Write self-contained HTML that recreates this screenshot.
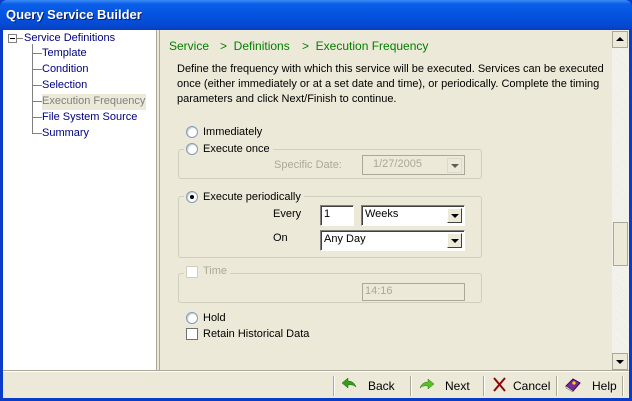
<!DOCTYPE html>
<html><head><meta charset="utf-8"><style>
*{margin:0;padding:0;box-sizing:border-box}
body{width:632px;height:401px;position:relative;overflow:hidden;background:#0a3cc8;font-family:"Liberation Sans",Tahoma,sans-serif;font-size:11px;color:#000}
.a{position:absolute}
#title{left:0;top:0;width:632px;height:30px;background:linear-gradient(#3b8cf5 0,#0a5ee8 4px,#0454e0 15px,#0548d0 26px,#0a3cc0 30px);border-radius:7px 7px 0 0}
#title span{position:absolute;left:6px;top:7px;color:#fff;font-weight:bold;font-size:13px;text-shadow:1px 1px #0a1e6e}
#client{left:3px;top:30px;width:626px;height:368px;background:#ece9d8}
#tree{left:3px;top:30px;width:153px;height:341px;background:#fff}
.t{position:absolute;color:#00007f;white-space:nowrap}
.ln{position:absolute;background:#808080}
.bc{position:absolute;color:#008000;top:39px;font-size:12px}
.g{color:#aca899}
.radio{position:absolute;width:12px;height:12px;border-radius:50%;background:#fff;border:1px solid #7f9db9;box-shadow:inset 1px 1px 1px #ccc}
.chk{position:absolute;width:12px;height:12px;background:#fff;border:1px solid #707070}
.grp{position:absolute;border:1px solid #d0d0bf;border-radius:3px}
.lbl{position:absolute;background:#ece9d8;padding:0 3px 0 2px;white-space:nowrap}
.inp{position:absolute;background:#fff;border:1px solid;border-color:#808080 #fff #fff #808080;box-shadow:inset 1px 1px #404040;padding:2px 0 0 3px}
.dd{position:absolute;right:2px;top:2px;width:15px;height:15px;background:#ece9d8;border:1px solid;border-color:#fff #404040 #404040 #fff}
.dd:after{content:"";position:absolute;left:3px;top:5px;border-left:4px solid transparent;border-right:4px solid transparent;border-top:4px solid #000}
.sep{position:absolute;top:376px;width:2px;height:20px;border-left:1px solid #aca899;border-right:1px solid #fff}
.btn{position:absolute;top:379px;font-size:12px}
</style></head><body>
<div id="title" class="a"><span>Query Service Builder</span></div>
<div id="client" class="a"></div>
<div id="tree" class="a"></div>
<div class="a" style="left:156px;top:30px;width:1px;height:341px;background:#aca899"></div>
<div class="a" style="left:159px;top:30px;width:1px;height:341px;background:#aca899"></div>
<div class="a" style="left:8px;top:34px;width:9px;height:9px;border:1px solid #808080;background:#fff"></div>
<div class="a" style="left:10px;top:38px;width:5px;height:1px;background:#000"></div>
<div class="ln" style="left:17px;top:38px;width:6px;height:1px"></div>
<div class="t" style="left:24px;top:32px">Service Definitions</div>
<div class="ln" style="left:32px;top:44px;width:1px;height:90px"></div>
<div class="ln" style="left:33px;top:53px;width:9px;height:1px"></div>
<div class="ln" style="left:33px;top:69px;width:9px;height:1px"></div>
<div class="ln" style="left:33px;top:85px;width:9px;height:1px"></div>
<div class="ln" style="left:33px;top:101px;width:9px;height:1px"></div>
<div class="ln" style="left:33px;top:117px;width:9px;height:1px"></div>
<div class="ln" style="left:33px;top:133px;width:9px;height:1px"></div>
<div class="t" style="left:42px;top:47px">Template</div>
<div class="t" style="left:42px;top:63px">Condition</div>
<div class="t" style="left:42px;top:79px">Selection</div>
<div class="t" style="left:42px;top:94px;background:#ece9d8;color:#808080;padding:1px 1px 1px 0;height:16px">Execution Frequency</div>
<div class="t" style="left:42px;top:111px">File System Source</div>
<div class="t" style="left:42px;top:127px">Summary</div>
<div class="bc" style="left:169px">Service</div>
<div class="bc" style="left:220px">&gt;&nbsp; Definitions</div>
<div class="bc" style="left:302px">&gt;&nbsp; Execution Frequency</div>
<div class="a" style="left:177px;top:62px;width:440px;line-height:15px">Define the frequency with which this service will be executed. Services can be executed once (either immediately or at a set date and time), or periodically. Complete the timing parameters and click Next/Finish to continue.</div>
<div class="radio" style="left:186px;top:126px"></div>
<div class="a" style="left:203px;top:126px">Immediately</div>
<div class="grp" style="left:178px;top:149px;width:304px;height:30px"></div>
<div class="lbl" style="left:184px;top:143px"><span style="display:inline-block;width:17px"></span>Execute once</div>
<div class="radio" style="left:186px;top:143px"></div>
<div class="a g" style="left:274px;top:159px">Specific Date:</div>
<div class="inp g" style="left:362px;top:155px;width:103px;height:20px;background:#ece9d8;box-shadow:none;border:1px solid #aca899;padding-left:10px">1/27/2005
<div class="dd" style="top:2px;border-color:#d0d0bf;opacity:.6"></div></div>
<div class="grp" style="left:178px;top:196px;width:304px;height:62px"></div>
<div class="lbl" style="left:184px;top:191px"><span style="display:inline-block;width:17px"></span>Execute periodically</div>
<div class="radio" style="left:186px;top:191px"></div>
<div class="a" style="left:190px;top:195px;width:4px;height:4px;border-radius:50%;background:#000"></div>
<div class="a" style="left:273px;top:208px">Every</div>
<div class="inp" style="left:320px;top:205px;width:34px;height:21px">1</div>
<div class="inp" style="left:361px;top:205px;width:104px;height:21px">Weeks<div class="dd"></div></div>
<div class="a" style="left:273px;top:232px">On</div>
<div class="inp" style="left:320px;top:230px;width:145px;height:21px">Any Day<div class="dd"></div></div>
<div class="grp" style="left:178px;top:273px;width:304px;height:30px"></div>
<div class="lbl g" style="left:184px;top:265px"><span style="display:inline-block;width:17px"></span>Time</div>
<div class="chk" style="left:186px;top:266px;border-color:#cfcfbf;background:#fff"></div>
<div class="inp g" style="left:362px;top:283px;width:103px;height:18px;background:#ece9d8;box-shadow:none;border:1px solid #aca899;padding:1px 0 0 2px">14:16</div>
<div class="radio" style="left:186px;top:312px"></div>
<div class="a" style="left:203px;top:312px">Hold</div>
<div class="chk" style="left:186px;top:328px"></div>
<div class="a" style="left:203px;top:328px">Retain Historical Data</div>
<div class="a" style="left:612px;top:30px;width:17px;height:341px;background:#f4f3ee;background-image:repeating-linear-gradient(45deg,#f7f6f0 0 1px,#ecebe4 1px 2px)"></div>
<div class="a" style="left:612px;top:31px;width:16px;height:17px;background:#ece9d8;border:1px solid #aca899"></div>
<div class="a" style="left:616px;top:37px;border-left:4px solid transparent;border-right:4px solid transparent;border-bottom:4px solid #000"></div>
<div class="a" style="left:613px;top:222px;width:15px;height:44px;background:#ece9d8;border:1px solid #aca899"></div>
<div class="a" style="left:612px;top:353px;width:16px;height:17px;background:#ece9d8;border:1px solid #aca899"></div>
<div class="a" style="left:616px;top:360px;border-left:4px solid transparent;border-right:4px solid transparent;border-top:4px solid #000"></div>
<div class="a" style="left:3px;top:370px;width:626px;height:1px;background:#aca899"></div>
<div class="a" style="left:3px;top:371px;width:626px;height:1px;background:#fff"></div>
<div class="sep" style="left:333px"></div>
<div class="sep" style="left:410px"></div>
<div class="sep" style="left:483px"></div>
<div class="sep" style="left:556px"></div>
<div class="sep" style="left:622px"></div>
<svg class="a" style="left:341px;top:378px" width="16" height="12"><path d="M1 5 L7 0 L7 3 Q13 3 15 9 Q12 6 7 7 L7 10 Z" fill="#3a9a1a" stroke="#1a6a0a" stroke-width=".5"/></svg>
<div class="btn" style="left:368px">Back</div>
<svg class="a" style="left:419px;top:378px" width="16" height="12"><path d="M15 6 L9 1 L9 4 Q3 4 1 10 Q4 7 9 8 L9 11 Z" fill="#5ac02a" stroke="#2a7a0a" stroke-width=".5"/></svg>
<div class="btn" style="left:445px">Next</div>
<svg class="a" style="left:492px;top:377px" width="15" height="15"><path d="M2 1 L13 14 M13 1 L2 14" stroke="#8a0a0a" stroke-width="2"/></svg>
<div class="btn" style="left:513px">Cancel</div>
<svg class="a" style="left:564px;top:377px" width="18" height="16"><path d="M2 9 L9 2 L16 6 L9 14 Z" fill="#7a2a9a" stroke="#3a0a4a"/><path d="M2 9 L9 14 L9 15 L2 11 Z" fill="#ddd" stroke="#555" stroke-width=".5"/><circle cx="10" cy="6" r="1.6" fill="#ffd800"/></svg>
<div class="btn" style="left:592px">Help</div>
</body></html>
